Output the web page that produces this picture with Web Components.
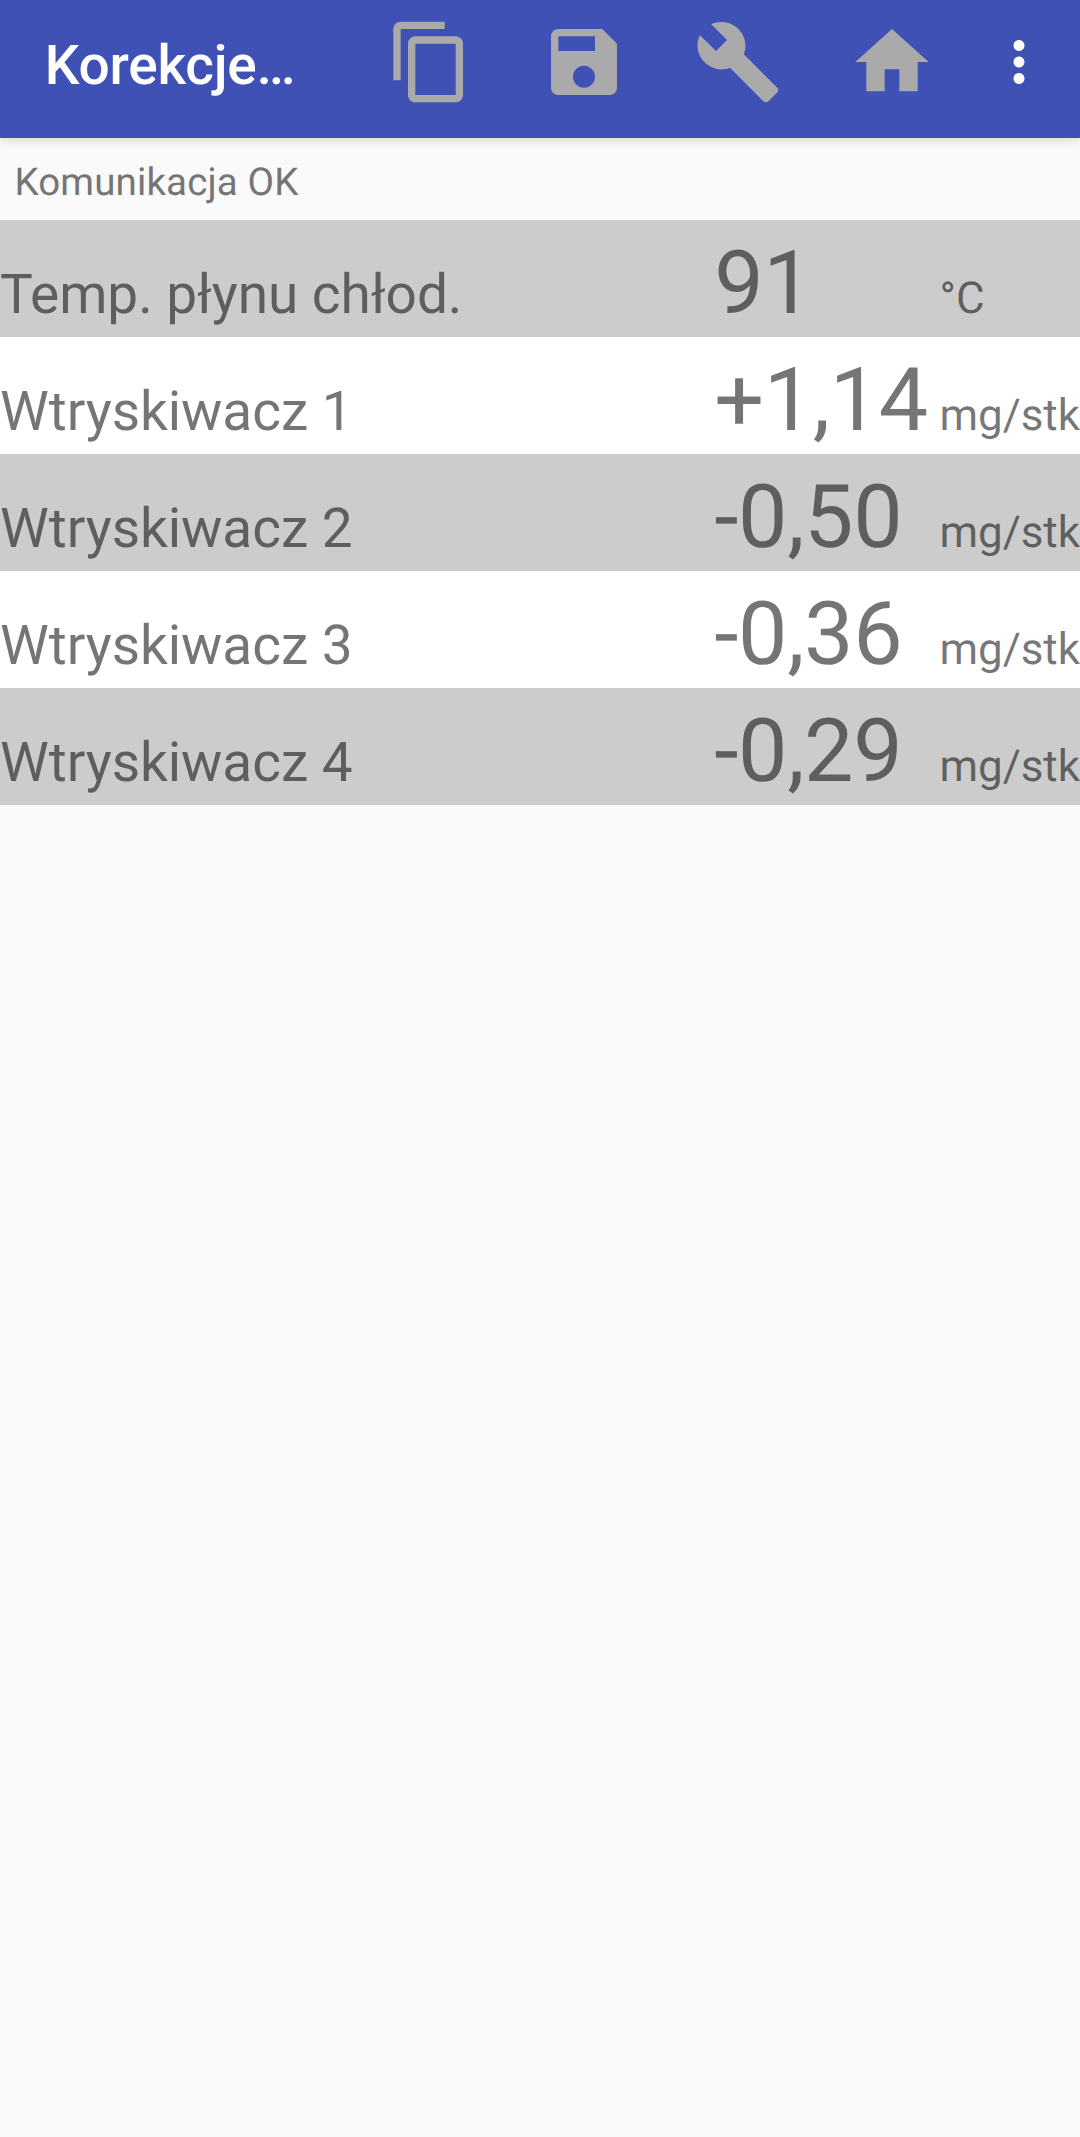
<!DOCTYPE html>
<html lang="pl">
<head>
<meta charset="utf-8">
<title>Korekcje</title>
<style>
html, body { margin: 0; height: 100%; background: #fafafa; }
body { font-family: Roboto, sans-serif; overflow: hidden; text-rendering: geometricPrecision; }
</style>
</head>
<body>
<diag-screen>
  <app-bar slot="bar">
    <span>Korekcje…</span>
    <tool-icon slot="actions" name="copy"></tool-icon>
    <tool-icon slot="actions" name="save"></tool-icon>
    <tool-icon slot="actions" name="build"></tool-icon>
    <tool-icon slot="actions" name="home"></tool-icon>
    <tool-icon slot="actions" name="more"></tool-icon>
  </app-bar>
  <status-line slot="status">Komunikacja OK</status-line>
  <reading-row shaded><span slot="label">Temp. płynu chłod.</span><span slot="value">91</span><span slot="unit">°C</span></reading-row>
  <reading-row><span slot="label">Wtryskiwacz 1</span><span slot="value">+1,14</span><span slot="unit">mg/stk</span></reading-row>
  <reading-row shaded><span slot="label">Wtryskiwacz 2</span><span slot="value">-0,50</span><span slot="unit">mg/stk</span></reading-row>
  <reading-row><span slot="label">Wtryskiwacz 3</span><span slot="value">-0,36</span><span slot="unit">mg/stk</span></reading-row>
  <reading-row shaded><span slot="label">Wtryskiwacz 4</span><span slot="value">-0,29</span><span slot="unit">mg/stk</span></reading-row>
</diag-screen>
<script>
const define = (name, html, init) => customElements.define(name, class extends HTMLElement {
  constructor() {
    super();
    this.attachShadow({ mode: 'open' }).innerHTML = html;
  }
  connectedCallback() { if (init) init(this); }
});

const icons = {
  copy: 'M16 1H4c-1.1 0-2 .9-2 2v14h2V3h12V1zm3 4H8c-1.1 0-2 .9-2 2v14c0 1.1.9 2 2 2h11c1.1 0 2-.9 2-2V7c0-1.1-.9-2-2-2zm0 16H8V7h11v14z',
  save: 'M17 3H5c-1.11 0-2 .9-2 2v14c0 1.1.89 2 2 2h14c1.1 0 2-.9 2-2V7l-4-4zm-5 16c-1.66 0-3-1.34-3-3s1.34-3 3-3 3 1.34 3 3-1.34 3-3 3zm3-10H5V5h10v4z',
  build: 'M22.7 19l-9.1-9.1c.9-2.3.4-5-1.5-6.9-2-2-5-2.4-7.4-1.3L9 6 6 9 1.6 4.7C.4 7.1.9 10.1 2.9 12.1c1.9 1.9 4.6 2.4 6.9 1.5l9.1 9.1c.4.4 1 .4 1.4 0l2.3-2.3c.5-.4.5-1.1.1-1.4z',
  home: 'M10 20v-6h4v6h5v-8h3L12 3 2 12h3v8z',
  more: 'M12 8c1.1 0 2-.9 2-2s-.9-2-2-2-2 .9-2 2 .9 2 2 2zm0 2c-1.1 0-2 .9-2 2s.9 2 2 2 2-.9 2-2-.9-2-2-2zm0 6c-1.1 0-2 .9-2 2s.9 2 2 2 2-.9 2-2-.9-2-2-2z'
};

define('tool-icon', `<style>
  :host { display: flex; flex: none; align-items: center; justify-content: center; width: 154px; color: #aaa; }
  :host([name="more"]) { width: 100px; color: #fff; }
  svg { display: block; width: 88px; height: 88px; fill: currentColor; }
  :host([name="more"]) svg { width: 66px; height: 66px; }
</style><svg viewBox="0 0 24 24" aria-hidden="true"><path/></svg>`,
  el => el.shadowRoot.querySelector('path').setAttribute('d', icons[el.getAttribute('name')]));

define('app-bar', `<style>
  :host { display: flex; height: 138.4px; box-sizing: border-box; padding: 0 11px 15.4px 44.8px; background: #3f51b5; position: relative; z-index: 1;
    box-shadow: 0 3px 10px rgba(0,0,0,.11), 0 2px 4px rgba(0,0,0,.04); }
  .title { flex: 1; color: #fff; font-size: 55px; font-weight: 500; line-height: 65px; letter-spacing: -.25px; padding-top: 33.5px; white-space: nowrap; }
  .actions { display: flex; align-items: center; }
</style><div class="title"><slot></slot></div><div class="actions"><slot name="actions"></slot></div>`);

define('status-line', `<style>
  :host { display: block; height: 81.2px; box-sizing: border-box; padding: 21.2px 14.4px 0; font-size: 38.5px; line-height: 46px; letter-spacing: .14px; color: #757575; }
</style><slot></slot>`);

define('reading-row', `<style>
  :host { display: grid; grid-template-columns: 714.2px 225.4px 1fr; align-items: baseline; height: 117px; box-sizing: border-box;
    padding-top: 12.3px; background: #fff; color: rgba(0,0,0,.54); white-space: nowrap; overflow: hidden; }
  :host([shaded]) { background: #ccc; }
  .label { font-size: 55px; letter-spacing: -.07px; }
  .value { font-size: 88px; line-height: 104px; letter-spacing: -.4px; }
  .unit { font-size: 44px; letter-spacing: -.1px; }
</style><div class="label"><slot name="label"></slot></div><div class="value"><slot name="value"></slot></div><div class="unit"><slot name="unit"></slot></div>`);

define('diag-screen', `<style>
  :host { display: flex; flex-direction: column; min-height: 2137px; background: #fafafa; }
</style><slot name="bar"></slot><slot name="status"></slot><main><slot></slot></main>`);
</script>
</body>
</html>
